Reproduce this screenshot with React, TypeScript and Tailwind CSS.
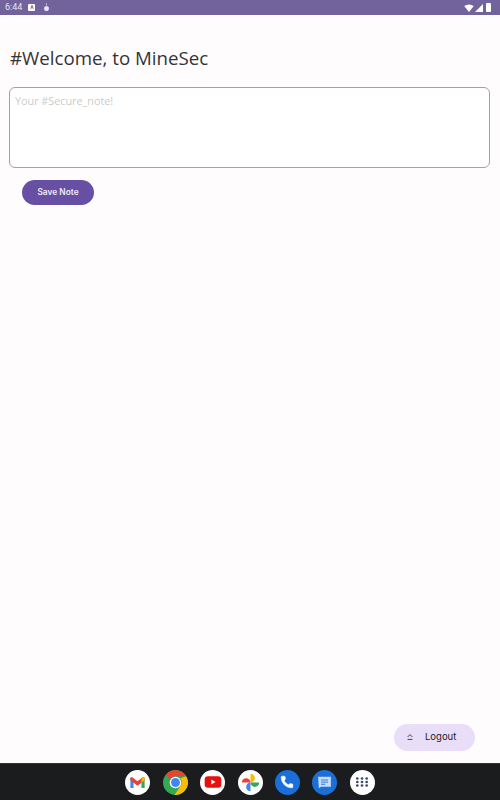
import { Phone } from "lucide-react";

function DockIcon({ children, bg = "bg-white" }: { children: React.ReactNode; bg?: string }) {
  return <div className={`flex h-[25px] w-[25px] items-center justify-center overflow-hidden rounded-full ${bg}`}>{children}</div>;
}

function Dock() {
  return (
    <div className="flex h-[37px] items-center justify-center gap-[12.4px] border-t border-[#333] bg-[#1b1c1e]">
      <DockIcon>
        <svg viewBox="0 0 24 24" className="h-[19px] w-[19px]">
          <path d="M3 6v13h4V10z" fill="#4285f4" />
          <path d="M21 6v13h-4V10z" fill="#34a853" />
          <path d="M3 6l2-1 7 5.5L19 5l2 1v3l-9 7-9-7z" fill="#ea4335" />
          <path d="M17 7.5L19 5l2 1v3l-4 3z" fill="#fbbc04" />
        </svg>
      </DockIcon>
      <DockIcon bg="bg-[#34a853]">
        <svg viewBox="0 0 24 24" className="h-[25px] w-[25px]">
          <path d="M12 0a12 12 0 0 1 10.4 6H12a6 6 0 0 0-5.6 3.6L2.9 4.2A12 12 0 0 1 12 0z" fill="#ea4335" />
          <path d="M22.4 6A12 12 0 0 1 11 24l5.6-8.5A6 6 0 0 0 16.6 8z" fill="#fbbc04" />
          <circle cx="12" cy="12" r="5.6" fill="#fff" />
          <circle cx="12" cy="12" r="4.3" fill="#4285f4" />
        </svg>
      </DockIcon>
      <DockIcon>
        <svg viewBox="0 0 24 24" className="h-[20px] w-[20px]">
          <rect x="2" y="5" width="20" height="14" rx="4" fill="#e8100f" />
          <path d="M10 9l5 3-5 3z" fill="#fff" />
        </svg>
      </DockIcon>
      <DockIcon>
        <svg viewBox="0 0 24 24" className="h-[21px] w-[21px]">
          <path d="M12 12V2a5 5 0 0 1 5 5 5 5 0 0 1-5 5z" fill="#fbbc04" />
          <path d="M12 12h10a5 5 0 0 1-5 5 5 5 0 0 1-5-5z" fill="#34a853" />
          <path d="M12 12v10a5 5 0 0 1-5-5 5 5 0 0 1 5-5z" fill="#4285f4" />
          <path d="M12 12H2a5 5 0 0 1 5-5 5 5 0 0 1 5 5z" fill="#ea4335" />
        </svg>
      </DockIcon>
      <DockIcon bg="bg-[#1a6fd8]">
        <Phone size={14} fill="#fff" stroke="#fff" strokeWidth={1} />
      </DockIcon>
      <DockIcon bg="bg-[#1a6fd8]">
        <svg viewBox="0 0 24 24" className="h-[17px] w-[17px]">
          <path d="M3 4h18v14H7l-3 2z" fill="#c9dcf7" />
          <path d="M7 8.5h10M7 11.5h10M7 14.5h6" stroke="#1a6fd8" strokeWidth="1.2" />
        </svg>
      </DockIcon>
      <DockIcon>
        <svg viewBox="0 0 24 24" className="h-[14px] w-[14px]" fill="#3c4a6b">
          {[4, 12, 20].map((cx) =>
            [6, 12, 18].map((cy) => <circle key={`${cx}-${cy}`} cx={cx} cy={cy} r="2.3" />),
          )}
        </svg>
      </DockIcon>
    </div>
  );
}

function StatusBar() {
  return (
    <div className="flex h-[15px] items-center justify-between bg-[#72639c] pl-[5px] pr-[9px] font-['Roboto',sans-serif] text-[9px] text-[#e8e4f0]">
      <div className="flex items-center">
        <span>6:44</span>
        <span className="ml-[6px] flex h-[7px] w-[7px] items-center justify-center rounded-[1px] bg-white text-[5px] font-bold leading-none text-[#72639c]">A</span>
        <svg viewBox="0 0 10 12" className="ml-[8px] h-[9px] w-[7px]" fill="#e8e4f0" stroke="#e8e4f0" strokeWidth="1">
          <path d="M5 0v3" />
          <rect x="2" y="4.5" width="6" height="6" rx="2.5" />
        </svg>
      </div>
      <div className="flex items-center gap-[1px]">
        <svg viewBox="0 0 12 10" className="h-[8px] w-[10px]" fill="#fff">
          <path d="M0 2.5Q6-1.5 12 2.5L6 10z" />
        </svg>
        <svg viewBox="0 0 10 10" className="h-[8px] w-[8px]" fill="#fff">
          <path d="M10 0v10H0z" />
        </svg>
        <div className="ml-[2px] h-[9px] w-[5px] rounded-[1px] bg-white" />
      </div>
    </div>
  );
}

export default function App() {
  return (
    <div className="flex h-[800px] w-[500px] flex-col overflow-hidden bg-[#fffcfe]">
      <StatusBar />
      <main className="flex flex-1 flex-col">
        <h1 className="ml-[10px] mt-[29px] font-['Open_Sans',sans-serif] text-[18.7px] font-medium leading-[28px] text-[#343436]">#Welcome, to MineSec</h1>
        <div className="ml-[9px] mr-[10px] mt-[15px] h-[81px] rounded-[6px] border border-[#a3a1a5] bg-white px-[5px] py-[5px] font-['Open_Sans',sans-serif] text-[10.8px] leading-[16px] text-[#cbcbcb]">
          Your #Secure_note!
        </div>
        <button className="ml-[22px] mt-[12px] flex h-[25px] w-[72px] items-center justify-center rounded-full bg-[#6750a4] font-['Inter',sans-serif] text-[8.4px] font-semibold text-[#f0eaf8]">
          Save Note
        </button>
        <div className="mt-auto mb-[12px] mr-[25px] flex justify-end">
          <button className="flex h-[27px] w-[81px] items-center rounded-full bg-[#e8def8] pl-[12px] font-['Inter',sans-serif] text-[9.5px] font-normal text-[#1d192b]">
            <svg viewBox="0 0 10 10" className="mb-[2px] h-[8px] w-[8px]" fill="none" stroke="#1d192b" strokeWidth="1">
              <path d="M2 5l3-3 3 3" />
              <path d="M2 8h6" />
            </svg>
            <span className="ml-[11px]">Logout</span>
          </button>
        </div>
      </main>
      <Dock />
    </div>
  );
}
